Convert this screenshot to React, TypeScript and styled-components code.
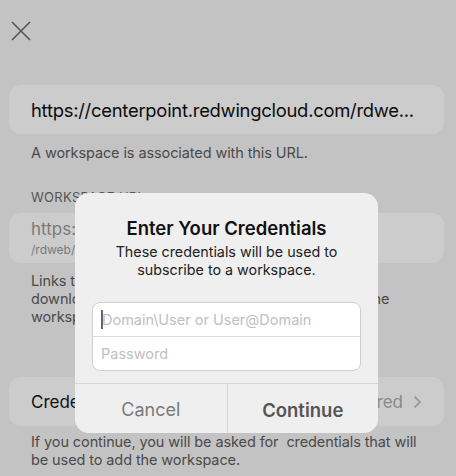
import styled, { createGlobalStyle } from "styled-components";

const GlobalStyle = createGlobalStyle`
  html, body {
    margin: 0;
    padding: 0;
    background: #c3c3c3;
  }
  body {
    font-family: Inter, "Liberation Sans", sans-serif;
    -webkit-font-smoothing: antialiased;
  }
`;

const Page = styled.div`
  position: relative;
  width: 456px;
  height: 476px;
  overflow: hidden;
  background: #c3c3c3;
  padding: 0 12px 0 9px;
  box-sizing: border-box;
`;

const CloseButton = styled.button`
  display: block;
  border: none;
  background: none;
  padding: 0;
  margin: 21px 0 0 2px;
  width: 20px;
  height: 20px;
  color: #555;
`;

const Card = styled.div<{ $height: number; $mt: number }>`
  margin-top: ${(p) => p.$mt}px;
  height: ${(p) => p.$height}px;
  border-radius: 12px;
  background: #cccccc;
  padding: 0 22px;
  display: flex;
  flex-direction: column;
  justify-content: center;
`;

const UrlText = styled.div`
  font-size: 18.4px;
  letter-spacing: -0.25px;
  color: #0c0c0c;
  white-space: nowrap;
`;

const Note = styled.p<{ $mt: number }>`
  margin: ${(p) => p.$mt}px 0 0;
  padding: 0 4px 0 22px;
  font-size: 14.5px;
  letter-spacing: -0.1px;
  line-height: 18px;
  color: #4a4a4a;
  white-space: nowrap;
`;

const SectionLabel = styled.div`
  margin-top: 27px;
  padding: 0 22px;
  font-size: 13px;
  color: #555;
  letter-spacing: 0.3px;
`;

const UrlMain = styled.div`
  font-size: 17px;
  color: #7a7a7a;
`;

const UrlSub = styled.div`
  font-size: 12px;
  color: #7a7a7a;
  margin-top: 3px;
`;

const Row = styled.div`
  display: flex;
  align-items: center;
  justify-content: space-between;
`;

const RowLabel = styled.span`
  font-size: 17px;
  color: #111;
`;

const RowValue = styled.span`
  display: flex;
  align-items: center;
  gap: 10px;
  font-size: 17px;
  color: #8a8a8a;
`;

const Dialog = styled.div`
  position: absolute;
  left: 75px;
  top: 193px;
  width: 303px;
  height: 240px;
  border-radius: 14px;
  background: #efefef;
  display: flex;
  flex-direction: column;
  overflow: hidden;
`;

const DialogBody = styled.div`
  flex: 1;
  padding: 24px 17px 0;
  text-align: center;
`;

const Title = styled.div`
  font-size: 18.5px;
  font-weight: 600;
  color: #111;
`;

const Message = styled.div`
  margin-top: 4px;
  font-size: 14.3px;
  line-height: 18px;
  color: #222;
`;

const FieldGroup = styled.div`
  margin-top: 23px;
  border: 1px solid #cfcfcf;
  border-radius: 8px;
  background: #fff;
  overflow: hidden;
  text-align: left;
`;

const Field = styled.div<{ $focused?: boolean }>`
  position: relative;
  height: 33px;
  display: flex;
  align-items: center;
  padding-left: 8px;
  font-size: 14.5px;
  color: #c0c0c0;
  & + & {
    border-top: 1px solid #dcdcdc;
  }
  &::before {
    content: "";
    display: ${(p) => (p.$focused ? "block" : "none")};
    width: 2px;
    height: 19px;
    background: #666;
    margin-right: -1px;
  }
`;

const Actions = styled.div`
  display: grid;
  grid-template-columns: 1fr 1fr;
  height: 49px;
  border-top: 1px solid #d6d6d6;
`;

const ActionButton = styled.button<{ $primary?: boolean }>`
  border: none;
  background: none;
  padding: 2px 0 0;
  font-family: inherit;
  font-size: ${(p) => (p.$primary ? 18.5 : 18)}px;
  font-weight: ${(p) => (p.$primary ? 600 : 400)};
  color: ${(p) => (p.$primary ? "#555" : "#7a7a7a")};
  & + & {
    border-left: 1px solid #d6d6d6;
  }
`;

const App = () => {
  return (
    <>
      <GlobalStyle />
      <Page>
        <CloseButton aria-label="Close">
          <svg width="20" height="20" viewBox="0 0 20 20">
            <path
              d="M1 1L19 19M19 1L1 19"
              stroke="currentColor"
              strokeWidth="1.6"
              fill="none"
            />
          </svg>
        </CloseButton>
        <Card $height={49} $mt={44}>
          <UrlText>https://centerpoint.redwingcloud.com/rdwe...</UrlText>
        </Card>
        <Note $mt={10}>A workspace is associated with this URL.</Note>
        <SectionLabel>WORKSPACE URL</SectionLabel>
        <Card $height={50} $mt={8}>
          <UrlMain>https://centerpoint.redwingcloud.com</UrlMain>
          <UrlSub>/rdweb/feed/webfeed.aspx</UrlSub>
        </Card>
        <Note $mt={9}>
          Links to apps and desktops will be available after
          <br />
          downloading the workspace. Make sure you trust the
          <br />
          workspace publisher.
        </Note>
        <Card $height={49} $mt={51}>
          <Row>
            <RowLabel>Credentials</RowLabel>
            <RowValue>
              Not Configured
              <svg width="9" height="14" viewBox="0 0 9 14">
                <path
                  d="M1.5 1.5L7 7L1.5 12.5"
                  stroke="#9a9a9a"
                  strokeWidth="1.8"
                  fill="none"
                />
              </svg>
            </RowValue>
          </Row>
        </Card>
        <Note $mt={7}>
          If you continue, you will be asked for&nbsp; credentials that will
          <br />
          be used to add the workspace.
        </Note>
        <Dialog>
          <DialogBody>
            <Title>Enter Your Credentials</Title>
            <Message>
              These credentials will be used to
              <br />
              subscribe to a workspace.
            </Message>
            <FieldGroup>
              <Field $focused>Domain\User or User@Domain</Field>
              <Field>Password</Field>
            </FieldGroup>
          </DialogBody>
          <Actions>
            <ActionButton>Cancel</ActionButton>
            <ActionButton $primary>Continue</ActionButton>
          </Actions>
        </Dialog>
      </Page>
    </>
  );
};

export default App;
